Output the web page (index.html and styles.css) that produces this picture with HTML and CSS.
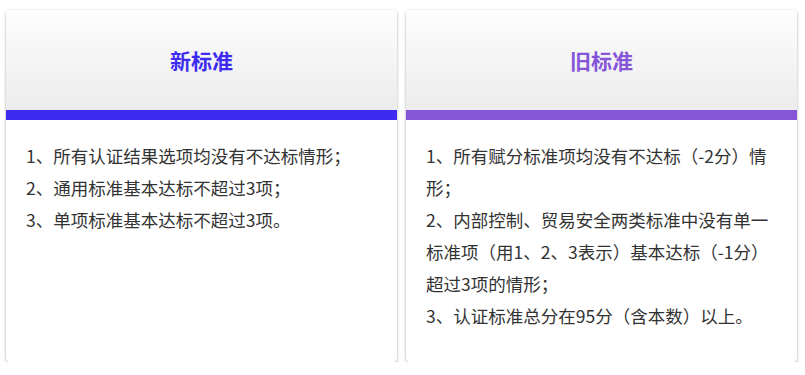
FILE: index.html
```html
<!DOCTYPE html>
<html lang="zh-CN">
<head>
<meta charset="utf-8">
<link rel="stylesheet" href="styles.css">
</head>
<body>
<div class="cards">
  <div class="card card-new">
    <div class="card-head"><h2 class="title">新标准</h2></div>
    <div class="bar"></div>
    <div class="card-body">
      <p>1、所有认证结果选项均没有不达标情形；</p>
      <p>2、通用标准基本达标不超过3项；</p>
      <p>3、单项标准基本达标不超过3项。</p>
    </div>
  </div>
  <div class="card card-old">
    <div class="card-head"><h2 class="title">旧标准</h2></div>
    <div class="bar"></div>
    <div class="card-body">
      <p>1、所有赋分标准项均没有不达标（-2分）情形；</p>
      <p>2、内部控制、贸易安全两类标准中没有单一标准项（用1、2、3表示）基本达标（-1分）超过3项的情形；</p>
      <p>3、认证标准总分在95分（含本数）以上。</p>
    </div>
  </div>
</div>
</body>
</html>
```
FILE: styles.css
```css
* { box-sizing: border-box; }
html, body { margin: 0; padding: 0; background: #fff; }
body {
  font-family: "Noto Sans CJK SC", "Noto Sans", sans-serif;
  color: #333;
}
.cards {
  display: grid;
  grid-template-columns: 391px 391px;
  gap: 9px;
  padding: 10px 0 0 6px;
}
.card {
  height: 352px;
  border-radius: 4px;
  background: #fff;
  box-shadow: 0 1px 3px rgba(0,0,0,0.35);
  overflow: hidden;
  display: flex;
  flex-direction: column;
}
.card-head {
  height: 100px;
  background: linear-gradient(#fdfdfd, #ececec);
  display: flex;
  align-items: center;
  justify-content: center;
}
.title {
  margin: 0;
  font-size: 21px;
  font-weight: 700;
  line-height: 1;
}
.card-new .title { color: #3d2cf0; }
.card-old .title { color: #8655d8; }
.bar { height: 10px; }
.card-new .bar { background: #3d2cf0; }
.card-old .bar { background: #8655d8; }
.card-body {
  padding: 20px 16px 0 20px;
  font-size: 17.5px;
  line-height: 32px;
  text-spacing-trim: space-all;
}
.card-body p { margin: 0; }
```
